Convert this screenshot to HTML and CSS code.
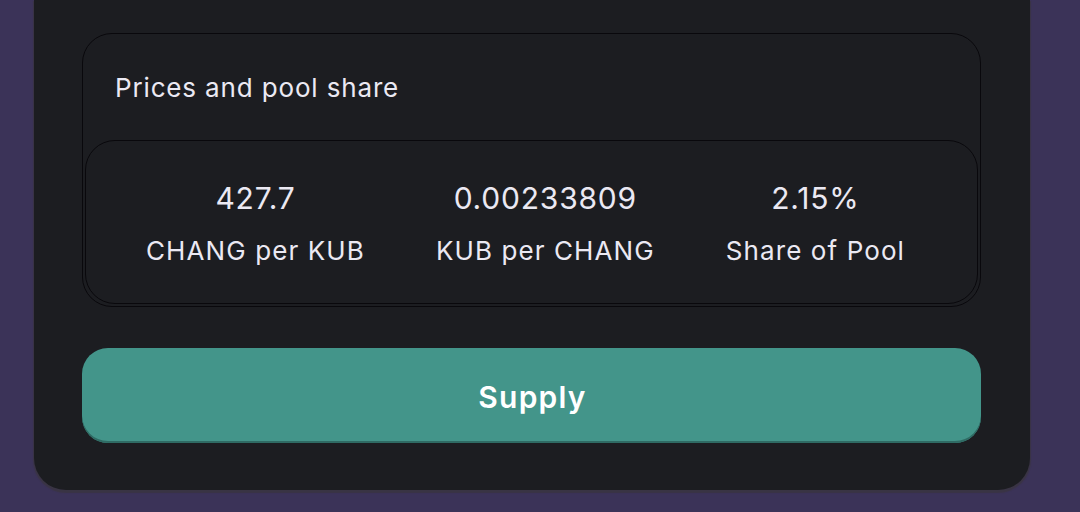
FILE: index.html
```html
<!DOCTYPE html>
<html lang="en">
<head>
<meta charset="utf-8">
<title>Supply</title>
<link rel="stylesheet" href="styles.css">
</head>
<body>
  <main class="card">
    <section class="prices">
      <h2 class="prices-title">Prices and pool share</h2>
      <div class="stats">
        <div class="stat">
          <div class="stat-value">427.7</div>
          <div class="stat-label">CHANG per KUB</div>
        </div>
        <div class="stat">
          <div class="stat-value">0.00233809</div>
          <div class="stat-label">KUB per CHANG</div>
        </div>
        <div class="stat">
          <div class="stat-value">2.15%</div>
          <div class="stat-label">Share of Pool</div>
        </div>
      </div>
    </section>
    <button class="supply-btn" type="button">Supply</button>
  </main>
</body>
</html>
```
FILE: styles.css
```css
html, body {
  margin: 0;
  padding: 0;
}
body {
  width: 1080px;
  height: 512px;
  overflow: hidden;
  background: #3b3358;
  font-family: Inter, "Noto Sans", sans-serif;
  color: #ebe9f3;
}
.card {
  box-sizing: border-box;
  width: 996px;
  margin-left: 34px;
  padding: 33px 49px 47px 48px;
  background: #1c1d21;
  border-radius: 0 0 32px 32px;
  box-shadow: 0 2px 1px 1px rgba(58, 52, 66, 0.9);
}
.prices {
  border: 1px solid #09080c;
  border-radius: 30px;
  padding: 0 2px 2px 2px;
}
.prices-title {
  margin: 0;
  height: 106px;
  display: flex;
  align-items: center;
  padding-left: 30px;
  font-size: 26px;
  font-weight: 400;
  letter-spacing: 0.85px;
}
.stats {
  display: flex;
  gap: 71px;
  padding: 37px 0 35px 60px;
  border: 1px solid #09080c;
  border-radius: 30px;
}
.stat {
  display: flex;
  flex-direction: column;
  align-items: center;
}
.stat-value {
  font-size: 30px;
  line-height: 40px;
  letter-spacing: 0.8px;
}
.stat-label {
  margin-top: 16px;
  font-size: 26px;
  line-height: 34px;
  letter-spacing: 1.1px;
}
.supply-btn {
  display: block;
  width: 100%;
  height: 95px;
  margin-top: 41px;
  border: none;
  border-radius: 26px;
  background: #43958a;
  box-shadow: inset 0 -2px 0 #2f6b64;
  color: #ffffff;
  font-family: Inter, "Noto Sans", sans-serif;
  font-size: 30px;
  font-weight: 600;
  letter-spacing: 1.2px;
  padding: 2px 0 0 2px;
  cursor: pointer;
}
```
